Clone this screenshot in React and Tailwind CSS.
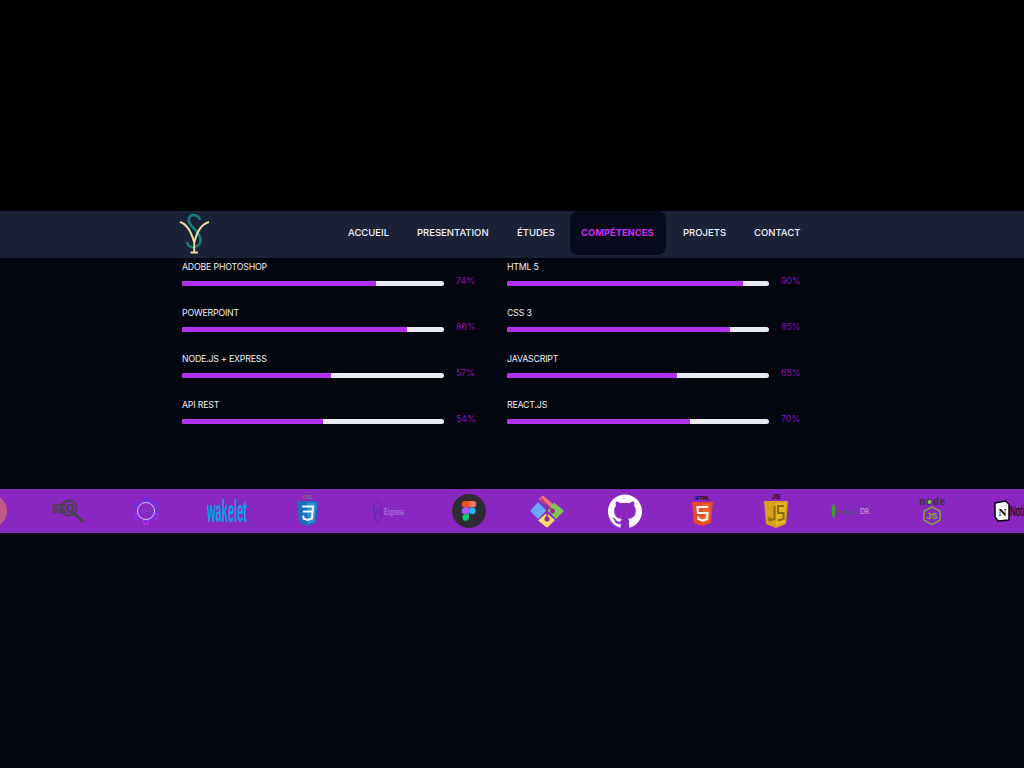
const navLinks = [
  { label: "ACCUEIL", width: "w-[41px]" },
  { label: "PRESENTATION", width: "w-[72px]" },
  { label: "ÉTUDES", width: "w-[36px]" },
  { label: "COMPÉTENCES", width: "w-[74px]", active: true },
  { label: "PROJETS", width: "w-[43px]" },
  { label: "CONTACT", width: "w-[48px]" },
];

const skills = [
  { name: "ADOBE PHOTOSHOP", value: 74 },
  { name: "HTML 5", value: 90 },
  { name: "POWERPOINT", value: 86 },
  { name: "CSS 3", value: 85 },
  { name: "NODE.JS + EXPRESS", value: 57 },
  { name: "JAVASCRIPT", value: 65 },
  { name: "API REST", value: 54 },
  { name: "REACT.JS", value: 70 },
];

function Logo() {
  return (
    <svg viewBox="0 0 32 42" className="w-[32px] h-[42px]">
      <path d="M21 7C20 2 12 0 10 5C8 10 14 14 18 19C23 25 23 32 16 34C12 35 9 33 8 29" fill="none" stroke="#14807c" strokeWidth="2.400" />
      <path d="M1 9C8 11 12 18 15 29M30 9C23 11 18 18 15.500 29" fill="none" stroke="#f0dfa6" strokeWidth="1.900" />
      <path d="M15.200 27V39M11.500 39.500H19" fill="none" stroke="#f0dfa6" strokeWidth="1.800" />
    </svg>
  );
}

function SkillBar({ name, value }) {
  return (
    <div className="h-[46px]">
      <div className="h-[15px] text-[8.800px] tracking-[-0.2px] leading-[14px] text-[#f1f1f8]">{name}</div>
      <div className="flex items-start h-[9px] mt-[1px]">
        <div className="w-[262px] h-[4.500px] mt-[5px] rounded-full bg-[#e9e9f1] overflow-hidden">
          <div className="h-full bg-[#b32ff5]" style={{ width: `${value}%` }} />
        </div>
        <span className="ml-[12px] -mt-[1px] text-[8.800px] leading-[11px] text-[#8f10b8]">{value}%</span>
      </div>
    </div>
  );
}

function Marquee() {
  return (
    <div className="flex items-center h-[44px] bg-[#8a27c0] overflow-hidden">
      {/* photo cut off by the left edge */}
      <div className="shrink-0 w-[34px] h-[34px] -ml-[27px] rounded-full bg-[#bf5a86]" />

      <svg viewBox="0 0 32 24" className="shrink-0 w-[32px] h-[24px] ml-[45px]">
        <circle cx="17" cy="9" r="7.500" fill="none" stroke="#444" strokeWidth="1.800" />
        <path d="M22 14.500L30.500 22" stroke="#444" strokeWidth="3" strokeLinecap="round" />
        <text x="0" y="13.500" fontSize="12" fontWeight="700" fill="#444" stroke="#444" strokeWidth="0.400" textLength="22" lengthAdjust="spacingAndGlyphs" fontFamily="Liberation Sans, sans-serif">SEO</text>
      </svg>

      <svg viewBox="0 0 28 28" className="shrink-0 w-[28px] h-[28px] ml-[48px]">
        <g fill="none" strokeWidth="1.200">
          <circle cx="14" cy="3" r="2.500" stroke="#5a35f0" />
          <circle cx="4.500" cy="8.500" r="2.500" stroke="#5a35f0" />
          <circle cx="23.500" cy="8.500" r="2.500" stroke="#5a35f0" />
          <circle cx="4.500" cy="19.500" r="2.500" stroke="#a030ec" />
          <circle cx="23.500" cy="19.500" r="2.500" stroke="#a030ec" />
          <circle cx="14" cy="25" r="2.500" stroke="#d030e0" />
          <circle cx="14" cy="14" r="10.500" stroke="#6a35ec" />
        </g>
        <circle cx="14" cy="14" r="8.500" fill="#8a27c0" stroke="#d8c4ec" strokeWidth="1" />
        <text x="14" y="16.500" textAnchor="middle" fontSize="6.500" fill="#7a4ae0" fontFamily="Liberation Sans, sans-serif">API</text>
      </svg>

      <svg viewBox="0 0 40 34" className="shrink-0 w-[40px] h-[34px] ml-[47px]">
        <text x="0" y="28" fontSize="32" fontWeight="700" fill="#0a9fe6" textLength="40" lengthAdjust="spacingAndGlyphs" fontFamily="Liberation Sans, sans-serif">wakelet</text>
      </svg>

      <svg viewBox="0 0 21 32" className="shrink-0 w-[21px] h-[32px] ml-[50px]">
        <text x="10.500" y="4" textAnchor="middle" fontSize="4.500" fontWeight="700" fill="#777" fontFamily="Liberation Sans, sans-serif">CSS</text>
        <path d="M0 6H21L19 28L10.500 31L2 28Z" fill="#1d6fb8" />
        <path d="M10.500 8H19L17.500 26.500L10.500 29Z" fill="#2f92dc" />
        <path d="M5 11.500H16L15 23.500L10.500 25L6.500 23.500L6.200 20.500M5.800 16.500H15.500" fill="none" stroke="#f2f6fb" strokeWidth="2" />
      </svg>

      <svg viewBox="0 0 32 24" className="shrink-0 w-[32px] h-[24px] ml-[55px]">
        <path d="M4.500 1L8.500 6V18L4.500 23L1 18V6Z" fill="none" stroke="#5a2aa8" strokeWidth="1" />
        <text x="4.500" y="15" textAnchor="middle" fontSize="7" fill="#5a2aa8" fontFamily="Liberation Sans, sans-serif">JS</text>
        <text x="11" y="15.500" fontSize="11" fill="#b28ee0" textLength="20" lengthAdjust="spacingAndGlyphs" fontFamily="Liberation Serif, serif">Express</text>
      </svg>

      <svg viewBox="0 0 34 34" className="shrink-0 w-[34px] h-[34px] ml-[47px]">
        <circle cx="17" cy="17" r="17" fill="#2f2b33" />
        <path d="M17 7H13a3.300 3.300 0 0 0 0 6.600H17Z" fill="#f24e1e" />
        <path d="M17 7H21a3.300 3.300 0 0 1 0 6.600H17Z" fill="#ff7262" />
        <path d="M17 13.600H13a3.300 3.300 0 0 0 0 6.600H17Z" fill="#a259ff" />
        <circle cx="20.300" cy="16.900" r="3.300" fill="#1abcfe" />
        <path d="M13 20.200H17V23.500a3.300 3.300 0 1 1 -4 -3.300Z" fill="#0acf83" />
      </svg>

      <svg viewBox="0 0 34 34" className="shrink-0 w-[34px] h-[34px] ml-[44px]">
        <path d="M9 5.500L12 2a1.500 1.500 0 0 1 2 0L24 11L20.500 14.500Z" fill="#f07272" />
        <path d="M8 8L16.500 16.500L8 25L1 18a1.500 1.500 0 0 1 0 -2Z" fill="#6aa8f8" />
        <path d="M24 8.500L33 16a1.500 1.500 0 0 1 0 2L26 25L17.500 16.500Z" fill="#7cc850" />
        <path d="M16.500 19L25 26L18 33a1.500 1.500 0 0 1 -2 0L8 26.500Z" fill="#f8dc6c" />
        <path d="M11 5L22 16M17 11V25" stroke="#9a2a8e" strokeWidth="1.500" />
        <circle cx="22.500" cy="17" r="2.500" fill="#9a2a8e" />
        <circle cx="17" cy="25" r="2.500" fill="#9a2a8e" />
      </svg>

      <svg viewBox="0 0 24 24" className="shrink-0 w-[34px] h-[34px] ml-[44px]">
        <path
          fill="#ffffff"
          d="M12 .297c-6.630 0-12 5.373-12 12 0 5.303 3.438 9.800 8.205 11.385.600.113.820-.258.820-.577 0-.285-.010-1.040-.015-2.040-3.338.724-4.042-1.610-4.042-1.610C4.422 18.070 3.633 17.700 3.633 17.700c-1.087-.744.084-.729.084-.729 1.205.084 1.838 1.236 1.838 1.236 1.070 1.835 2.809 1.305 3.495.998.108-.776.417-1.305.760-1.605-2.665-.300-5.466-1.332-5.466-5.930 0-1.310.465-2.380 1.235-3.220-.135-.303-.540-1.523.105-3.176 0 0 1.005-.322 3.300 1.230.960-.267 1.980-.399 3-.405 1.020.006 2.040.138 3 .405 2.280-1.552 3.285-1.230 3.285-1.230.645 1.653.240 2.873.120 3.176.765.840 1.230 1.910 1.230 3.220 0 4.610-2.805 5.625-5.475 5.920.420.360.810 1.096.810 2.220 0 1.606-.015 2.896-.015 3.286 0 .315.210.690.825.570C20.565 22.092 24 17.592 24 12.297c0-6.627-5.373-12-12-12"
        />
      </svg>

      <svg viewBox="0 0 21 32" className="shrink-0 w-[21px] h-[32px] ml-[50px]">
        <text x="10.500" y="5" textAnchor="middle" fontSize="6" fontWeight="700" fill="#111" fontFamily="Liberation Mono, monospace">HTML</text>
        <path d="M0 7H21L19 28L10.500 31L2 28Z" fill="#e44d26" />
        <path d="M10.500 9H18.500L17 26.500L10.500 29Z" fill="#f16529" />
        <path d="M16 12H5.500L6 18H15.500L15 24L10.500 25.500L6.500 24L6.300 21.500" fill="none" stroke="#fbf3ef" strokeWidth="2.200" />
      </svg>

      <svg viewBox="0 0 24 34" className="shrink-0 w-[24px] h-[34px] ml-[51px]">
        <text x="12" y="5" textAnchor="middle" fontSize="6.500" fontWeight="700" fill="#111" fontFamily="Liberation Sans, sans-serif">JS</text>
        <path d="M0 7H24L22 30L12 34L2 30Z" fill="#d6a21c" />
        <path d="M12 9H22L20.500 28.500L12 32Z" fill="#e5b526" />
        <path d="M10.500 12V25L5.500 26.500V23M20 12H14V19H19.500V25L14 26.500" fill="none" stroke="#8a6a14" strokeWidth="2" />
      </svg>

      <svg viewBox="0 0 40 16" className="shrink-0 w-[40px] h-[16px] ml-[43px]">
        <path d="M2.500 0C5 4 5 11 2.500 16C0 11 0 4 2.500 0Z" fill="#3f9c35" />
        <text x="7" y="11" fontSize="9" fill="#55505c" textLength="20" lengthAdjust="spacingAndGlyphs" fontFamily="Liberation Serif, serif">mongo</text>
        <text x="29" y="11" fontSize="9" fill="#cbb8de" textLength="11" lengthAdjust="spacingAndGlyphs" fontFamily="Liberation Serif, serif">DB.</text>
      </svg>

      <svg viewBox="0 0 26 28" className="shrink-0 w-[26px] h-[28px] ml-[48px]">
        <text x="0" y="8" fontSize="10" fontWeight="700" fill="#333" textLength="26" fontFamily="Liberation Sans, sans-serif">node</text>
        <circle cx="10.500" cy="5" r="2" fill="#8cc84b" />
        <path d="M13 10L21 14.250V23L13 27.500L5 23V14.250Z" fill="none" stroke="#7fb82f" strokeWidth="1.300" />
        <text x="13" y="22" textAnchor="middle" fontSize="9" fontWeight="700" fill="#7fb82f" fontFamily="Liberation Sans, sans-serif">JS</text>
      </svg>

      <svg viewBox="0 0 40 22" className="shrink-0 w-[40px] h-[22px] ml-[49px]">
        <path d="M1 3L11 1L15 4V20L4 21L1 17Z" fill="#ffffff" stroke="#000" strokeWidth="1.500" />
        <text x="8.500" y="16" textAnchor="middle" fontSize="11" fontWeight="700" fill="#000" fontFamily="Liberation Serif, serif">N</text>
        <text x="16" y="16" fontSize="14" fill="#000" textLength="23" lengthAdjust="spacingAndGlyphs" fontFamily="Liberation Sans, sans-serif">Notion</text>
      </svg>
    </div>
  );
}

export default function App() {
  return (
    <div className="min-h-screen bg-[#03050f] font-['Inter',sans-serif]">
      <div className="h-[211px] bg-black" />

      <nav className="h-[47px] bg-[#1b2238]">
        <div className="flex items-center w-[660px] mx-auto h-full">
          <div className="-ml-[3px] -mt-[1px]">
            <Logo />
          </div>
          <ul className="flex gap-[6px] ml-[126px] h-[44px] self-start">
            {navLinks.map((link) => (
              <li
                key={link.label}
                className={`flex items-center px-[11px] rounded-lg whitespace-nowrap ${
                  link.active ? "bg-[#060a1a] font-bold text-[#d22bec] text-[9.400px]" : "font-medium text-[#f4f4f8] text-[9.500px]"
                }`}
              >
                <span className={`pt-[1px] ${link.width}`}>{link.label}</span>
              </li>
            ))}
          </ul>
        </div>
      </nav>

      <div className="grid grid-cols-[325px_325px] w-[660px] mx-auto pt-[2px]">
        {skills.map((skill) => (
          <SkillBar key={skill.name} name={skill.name} value={skill.value} />
        ))}
      </div>

      <div className="mt-[45px]">
        <Marquee />
      </div>
    </div>
  );
}
